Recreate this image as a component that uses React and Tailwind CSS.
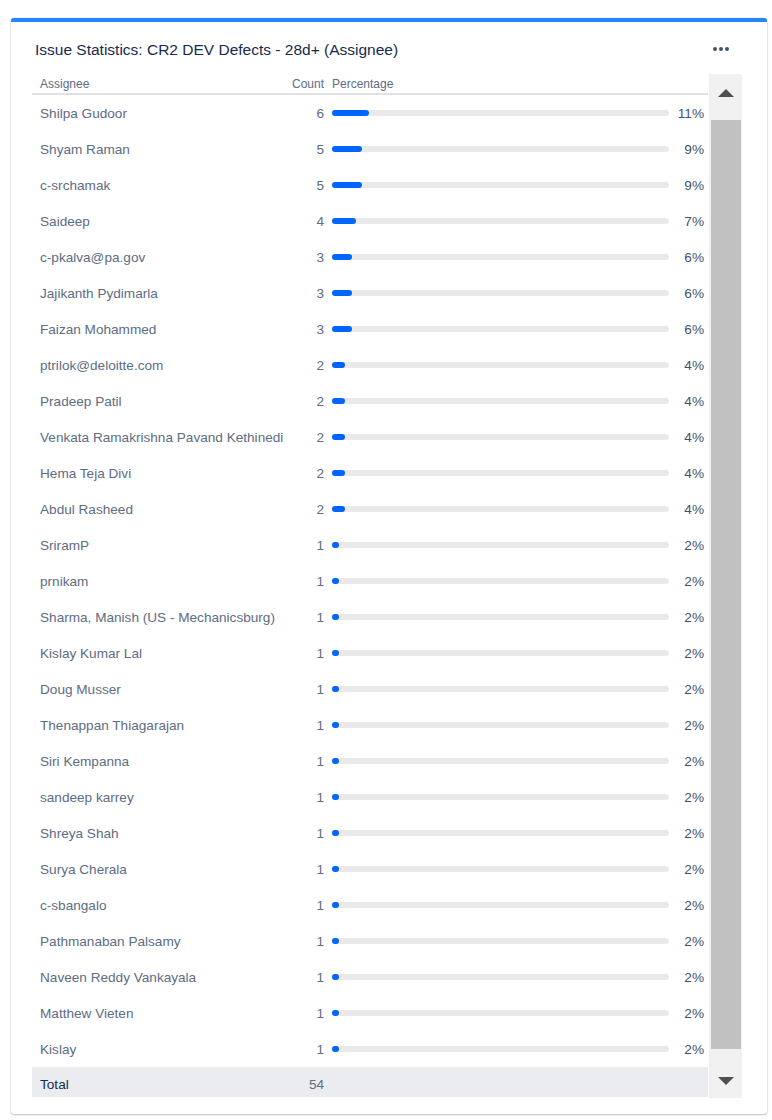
import React from "react";

const rows = [
  ["Shilpa Gudoor", 6, 11],
  ["Shyam Raman", 5, 9],
  ["c-srchamak", 5, 9],
  ["Saideep", 4, 7],
  ["c-pkalva@pa.gov", 3, 6],
  ["Jajikanth Pydimarla", 3, 6],
  ["Faizan Mohammed", 3, 6],
  ["ptrilok@deloitte.com", 2, 4],
  ["Pradeep Patil", 2, 4],
  ["Venkata Ramakrishna Pavand Kethinedi", 2, 4],
  ["Hema Teja Divi", 2, 4],
  ["Abdul Rasheed", 2, 4],
  ["SriramP", 1, 2],
  ["prnikam", 1, 2],
  ["Sharma, Manish (US - Mechanicsburg)", 1, 2],
  ["Kislay Kumar Lal", 1, 2],
  ["Doug Musser", 1, 2],
  ["Thenappan Thiagarajan", 1, 2],
  ["Siri Kempanna", 1, 2],
  ["sandeep karrey", 1, 2],
  ["Shreya Shah", 1, 2],
  ["Surya Cherala", 1, 2],
  ["c-sbangalo", 1, 2],
  ["Pathmanaban Palsamy", 1, 2],
  ["Naveen Reddy Vankayala", 1, 2],
  ["Matthew Vieten", 1, 2],
  ["Kislay", 1, 2],
];

const font = { fontFamily: '"Liberation Sans", Arial, sans-serif' };

export default function App() {
  return (
    <div className="bg-white w-[772px] h-[1120px] pt-[18px] pl-[11px]" style={font}>
      <div className="w-[756px] h-[1096px] bg-white rounded-[3px] border-t-4 border-[#2684ff] shadow-[0_1px_2px_rgba(9,30,66,0.25),0_0_1px_rgba(9,30,66,0.31)] flex flex-col">
        <div className="flex items-center justify-between pl-[24px] pr-[38px] pt-[17px] h-[37px]">
          <div className="text-[15.5px] leading-[20px] text-[#172b4d] mt-[1px]">
            Issue Statistics: CR2 DEV Defects - 28d+ (Assignee)
          </div>
          <svg width="16" height="4" viewBox="0 0 16 4">
            <circle cx="2" cy="2" r="2" fill="#42526e" />
            <circle cx="8" cy="2" r="2" fill="#42526e" />
            <circle cx="14" cy="2" r="2" fill="#42526e" />
          </svg>
        </div>
        <div className="flex mt-[15px] ml-[21px] w-[710px] h-[1024px]">
          <div className="w-[676px] flex flex-col">
            <div className="flex items-center h-[21px] border-b-2 border-[#dfe1e6] text-[12px] text-[#5e6c84]">
              <div className="w-[252px] pl-2">Assignee</div>
              <div className="w-[40px] text-right">Count</div>
              <div className="pl-2">Percentage</div>
            </div>
            {rows.map(([name, count, pct]) => (
              <div key={name} className="flex items-center h-[36px] text-[13.6px]">
                <div className="w-[252px] pl-2 text-[#5e6c84] whitespace-nowrap mt-[2px]">{name}</div>
                <div className="w-[40px] text-right text-[#5e6c84] mt-[2px]">{count}</div>
                <div className="ml-2 w-[337px] h-[6px] rounded-full bg-[#e9e9e9]">
                  <div className="h-[6px] rounded-full bg-[#0065ff]" style={{ width: `${pct}%` }} />
                </div>
                <div className="flex-1 text-right pr-[4px] text-[#42526e] mt-[2px]">{pct}%</div>
              </div>
            ))}
            <div className="flex items-center h-[30px] bg-[#ebecf0] text-[13.6px] pt-[6px]">
              <div className="w-[252px] pl-2 text-[#172b4d]">Total</div>
              <div className="w-[40px] text-right text-[#5e6c84]">54</div>
            </div>
          </div>
          <div className="ml-[1px] w-[33px] bg-[#f1f1f1] flex flex-col items-center">
            <div className="h-[46px] w-full flex items-start justify-center pt-[15px]">
              <svg width="16" height="8" viewBox="0 0 16 8">
                <polygon points="8,0 16,8 0,8" fill="#505050" />
              </svg>
            </div>
            <div className="w-[30px] h-[929px] bg-[#c1c1c1]" />
            <div className="flex-1 w-full flex items-start justify-center pt-[28px]">
              <svg width="16" height="8" viewBox="0 0 16 8">
                <polygon points="0,0 16,0 8,8" fill="#505050" />
              </svg>
            </div>
          </div>
        </div>
      </div>
    </div>
  );
}
